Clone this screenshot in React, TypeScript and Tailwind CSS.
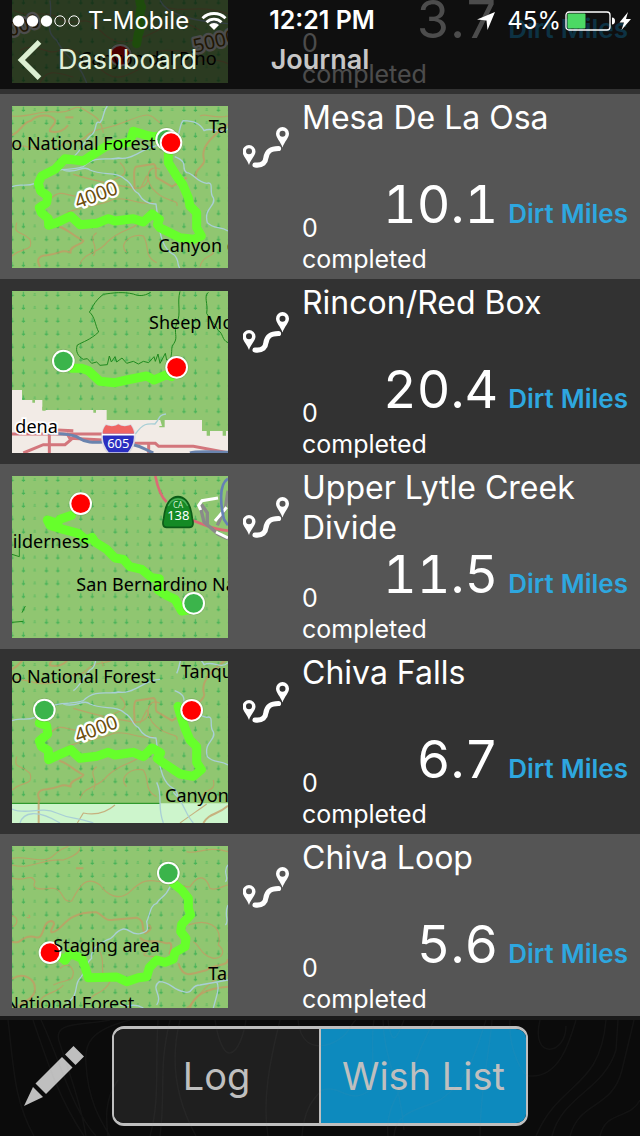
import React from "react";

const FONT = "font-['Inter','Liberation_Sans',sans-serif]";

type MarkerProps = { x: number; y: number; kind: "start" | "end" };

function Marker({ x, y, kind }: MarkerProps) {
  return (
    <g>
      <circle cx={x} cy={y} r="36" fill="#5d8a45" opacity="0.35" />
      <circle cx={x} cy={y} r="34" fill="#fff" />
      <circle cx={x} cy={y} r="28" fill={kind === "start" ? "#3bb44b" : "#ff0000"} />
    </g>
  );
}

function Trail({ d }: { d: string }) {
  return <path d={d} fill="none" stroke="#66ff2b" strokeWidth="27" strokeLinejoin="round" strokeLinecap="round" />;
}

function Contours({ d, wide }: { d: string; wide?: boolean }) {
  return <path d={d} fill="none" stroke="#c49a64" strokeWidth={wide ? 6 : 3.5} strokeLinejoin="round" opacity="0.75" />;
}

function Streams({ d }: { d: string }) {
  return <path d={d} fill="none" stroke="#a9cfd6" strokeWidth="4" strokeLinejoin="round" />;
}

function Label({ x, y, children, halo }: { x: number; y: number; children: string; halo?: boolean }) {
  return (
    <text
      x={x}
      y={y}
      fontSize="54"
      fill="#000"
      stroke={halo ? "#fff" : "none"}
      strokeWidth={halo ? 10 : 0}
      paintOrder="stroke"
      className="font-['Noto_Sans',sans-serif]"
    >
      {children}
    </text>
  );
}

function Elevation({ x, y, value, angle = -20 }: { x: number; y: number; value: string; angle?: number }) {
  return (
    <text
      transform={`rotate(${angle} ${x} ${y})`}
      x={x}
      y={y}
      fontSize="58"
      fill="#6b4e0c"
      stroke="#fff"
      strokeWidth="14"
      strokeLinejoin="round"
      paintOrder="stroke"
      className="font-['Noto_Sans',sans-serif]"
    >
      {value}
    </text>
  );
}

function MapFrame({ id, top, children }: { id: string; top: number; children: React.ReactNode }) {
  return (
    <svg viewBox={`36 ${top} 648 486`} className="h-[162px] w-[216px] shrink-0" role="img" aria-label="Trail map">
      <defs>
        <pattern id={id} x="19" y={top} width="103.200" height="38.800" patternUnits="userSpaceOnUse">
          <path d="M17 2v16M51.400 2v16" stroke="#56b862" strokeWidth="4" />
          <path d="M12 13h10M46.400 13h10" stroke="#45b154" strokeWidth="4" />
          <path d="M82 8h6M81 13h8" stroke="#62bb62" strokeWidth="3" />
        </pattern>
      </defs>
      <rect x="36" y={top} width="648" height="486" fill="#90c671" />
      <rect x="36" y={top} width="648" height="486" fill={`url(#${id})`} />
      {children}
    </svg>
  );
}

function CanyonTerrain() {
  return (
    <g>
      <Contours
        wide
        d="M36 118C70 100 66 78 94 74C110 56 150 52 165 72C170 90 145 92 150 106C175 112 195 102 204 88M402 286C408 260 395 225 408 212L460 204C475 208 462 235 470 245L516 272L560 245M590 250C575 220 620 210 612 190C600 150 640 120 684 84M120 512C112 498 108 480 140 478C190 470 180 460 212 470C205 450 250 445 250 434C220 420 205 400 178 392"
      />
      <Contours d="M36 60C80 66 120 42 170 48S220 20 250 40S300 60 310 110M40 150C90 140 110 180 180 150C220 120 230 150 260 120S300 110 380 76S450 60 480 80M360 200C390 230 370 240 345 250C300 270 330 290 250 300C200 310 190 270 150 310M220 235C270 250 310 262 390 274C440 285 450 250 440 240L420 280M480 220C440 200 430 260 470 290C500 320 540 310 530 330M200 350C250 330 300 330 340 310C380 300 420 330 460 320M600 60C620 50 640 70 684 60M36 480C70 450 100 470 90 430C60 400 40 420 50 380M240 505C250 470 300 470 320 440C360 400 380 410 420 380M290 410C260 430 300 450 280 480M600 512C610 470 650 490 640 450M380 470C350 440 400 410 430 420C450 450 430 480 470 500" />
      <Contours wide d="M196 64h24" />
      <Streams d="M322 30C305 50 315 65 300 80C280 70 295 110 270 120C250 140 240 170 220 182M36 272C60 260 75 275 105 262M150 228C190 215 210 225 250 212C285 175 330 195 355 186C400 195 430 150 480 148M190 222C230 235 250 205 270 222C310 240 350 225 375 250C400 262 395 285 415 292C425 310 440 325 468 324L474 370C480 420 490 460 520 475C540 490 530 512 540 516M530 130C540 110 540 80 550 74C580 75 600 80 612 104C640 90 660 120 684 98M524 182C570 200 540 215 560 230C580 230 590 260 620 262C645 255 625 290 640 305C650 330 610 335 622 380C640 400 660 390 684 405" />
    </g>
  );
}

function MapDelPino() {
  return (
    <MapFrame id="trees-del-pino" top={-238}>
      <Contours d="M40 30C100 60 130 20 190 60C230 80 250 40 290 80S350 140 430 110S520 40 600 90M60 150C110 120 140 170 180 150S260 180 320 220S430 170 480 200S600 150 684 190M120 248C140 200 180 220 220 230M500 20C540 40 600 10 684 40M460 160C520 130 560 180 640 130" />
      <Streams d="M150 0C160 60 130 90 170 120C200 180 230 170 260 248M480 0C500 40 560 60 684 70" />
      <Trail d="M430 -60C445 -30 405 -10 425 20C410 50 430 80 415 100L410 130" />
      <Marker x={361} y={165} kind="end" />
      <Label x={240} y={195}>Canyon del Pino</Label>
      <Elevation x={30} y={110} value="000" />
      <Elevation x={585} y={158} value="5000" angle={-14} />
    </MapFrame>
  );
}

function MapMesa() {
  return (
    <MapFrame id="trees-mesa" top={30}>
      <CanyonTerrain />
      <Trail d="M500 118L460 122L440 118L400 106L390 138L320 150L275 178L250 195L195 188L165 220L125 240L115 262L122 285L143 300L140 320L118 335L124 350L145 368L146 388L175 378L212 360L240 386L290 382L325 368L345 375L400 368L430 378L456 354L478 370L472 385L480 395L540 425L580 430L604 420L590 395L590 350L570 330L565 305L548 265L530 240L505 200L505 170" />
      <Label x={34} y={162}>o National Forest</Label>
      <Label x={626} y={110}>Ta</Label>
      <Label x={475} y={468}>Canyon d</Label>
      <Elevation x={233} y={338} value="4000" />
      <Marker x={500} y={130} kind="start" />
      <Marker x={513} y={140} kind="end" />
    </MapFrame>
  );
}

function MapRincon() {
  return (
    <MapFrame id="trees-rincon" top={33}>
      <path d="M36 330H66V360H127V390H320V420H606V453H684V519H36Z" fill="#f2ebe6" />
      <path d="M97 358h8v10h-8zM127 380h10v12h-10zM280 388h8v10h-8zM480 418h14v24h-16v-4h8zM620 451h10v16h-10zM668 451h10v16h-10z" fill="#90c671" />
      <path d="M452 37C430 50 415 48 400 42C370 35 340 38 310 43C280 65 275 90 268 96C285 110 285 135 296 156C270 180 250 185 232 195C225 215 235 230 250 238L262 236L275 250L290 246L300 256L322 254L328 228L334 246L345 230L350 246L366 234L380 250L400 244L415 252L430 244L446 248L462 230L466 244L474 222L480 250L496 220L500 240L510 240C520 210 510 205 522 190C535 170 520 160 530 130C545 100 530 70 540 34M625 37C610 50 625 70 620 100C630 120 645 130 655 152C670 160 665 180 684 188" fill="none" stroke="#1f8a1f" strokeWidth="3" />
      <path d="M406 462C430 430 440 430 465 432C480 415 475 405 498 402" fill="none" stroke="#a9cfd6" strokeWidth="4" />
      <path d="M36 462H310M148 440V519M170 450L220 452M200 458L212 480L195 494H130L70 519M210 475L310 480M400 490H466L476 499H580L684 518M446 490V519" fill="none" stroke="#d3767c" strokeWidth="9" />
      <path d="M130 458C170 462 205 458 230 470C260 490 280 488 315 486M400 494C430 500 435 510 460 519M570 519C590 512 640 516 684 517" fill="none" stroke="#6a84ae" strokeWidth="9" />
      <Trail d="M215 265L245 265L265 272L300 304L345 308L380 300L440 288L462 300L500 284L515 290" />
      <Marker x={190} y={243} kind="start" />
      <Marker x={530} y={262} kind="end" />
      <Label x={447} y={148}>Sheep Mo</Label>
      <Label x={46} y={459} halo>dena</Label>
      <path d="M318 435C330 440 345 440 355 433C365 440 380 440 392 435C408 455 410 490 385 519H325C300 490 302 455 318 435Z" fill="#2b2fc0" stroke="#d8d8e2" strokeWidth="5" />
      <path d="M318 435C330 440 345 440 355 433C365 440 380 440 392 435C399 444 402 453 402 461H308C308 452 311 443 318 435Z" fill="#ef6464" />
      <path d="M306 464H404" stroke="#fff" strokeWidth="5" />
      <text x="355" y="503" fontSize="39" fill="#fff" textAnchor="middle" className="font-['Noto_Sans',sans-serif]">605</text>
    </MapFrame>
  );
}

function MapLytle() {
  return (
    <MapFrame id="trees-lytle" top={30}>
      <path d="M466 30C472 60 480 90 500 108M575 162C610 175 640 192 684 194" fill="none" stroke="#db6b76" strokeWidth="8" />
      <path d="M600 118L612 168L655 205L684 218M604 115L622 140L622 175M684 74L676 126L652 178" fill="none" stroke="#8a8a8a" strokeWidth="10" />
      <path d="M654 96L606 104L596 118L602 132M680 124L645 165M648 198L684 216" fill="none" stroke="#fff" strokeWidth="9" />
      <path d="M684 38C655 55 662 120 672 160L684 178" fill="none" stroke="#6680b4" strokeWidth="8" />
      <path d="M36 265L58 272V238M36 469L70 466M66 440L76 420" fill="none" stroke="#1f8a1f" strokeWidth="3" />
      <Trail d="M215 148L180 160L172 172L142 162L150 178L190 190L235 202L258 222L276 214L285 228L320 250L345 276L370 280L390 302L425 310L455 335L478 338L474 372L500 388L525 400L545 435L575 430" />
      <Marker x={242} y={113} kind="end" />
      <Label x={38} y={245}>ilderness</Label>
      <Label x={229} y={374}>San Bernardino Na</Label>
      <Marker x={581} y={412} kind="start" />
      <path d="M500 184C488 184 487 172 491 158C495 120 508 93 534 92C560 93 573 120 577 158C581 172 580 184 568 184Z" fill="#148a25" stroke="#0c5c18" strokeWidth="5" />
      <path d="M505 120C512 104 522 99 534 99C546 99 556 104 563 120" fill="none" stroke="#48b058" strokeWidth="4" />
      <text x="534" y="125" fontSize="24" fill="#d4f0d4" textAnchor="middle" className="font-['Noto_Sans',sans-serif]">CA</text>
      <text x="535" y="163" fontSize="39" fill="#fff" textAnchor="middle" className="font-['Noto_Sans',sans-serif]">138</text>
    </MapFrame>
  );
}

function MapChivaFalls() {
  return (
    <MapFrame id="trees-falls" top={36}>
      <path d="M36 463H684V522H36Z" fill="#cdf5cc" />
      <g transform="translate(0 -57)">
        <CanyonTerrain />
      </g>
      <path d="M36 463H480" stroke="#128a12" strokeWidth="3" />
      <Contours wide d="M116 522V455M610 522C630 490 650 500 684 470" />
      <Contours d="M232 522L250 492C290 500 320 490 345 468M540 522C570 500 600 480 620 465" />
      <Streams d="M36 480C80 500 120 470 170 492S220 500 280 522M60 522C70 490 110 480 180 522M470 400C490 440 470 470 490 522M520 430C560 470 550 490 580 522" />
      <Trail d="M118 222L140 230L143 255L118 276L124 292L145 305L146 332L175 318L212 302L240 328L290 322L325 310L345 318L400 310L430 323L456 297L482 312L472 328L485 338L540 375L580 382L604 362L590 340L590 293L570 273L556 240L542 200L534 172" />
      <Label x={34} y={103}>o National Forest</Label>
      <Label x={543} y={88}>Tanqu</Label>
      <Label x={495} y={458}>Canyon</Label>
      <Elevation x={233} y={281} value="4000" />
      <Marker x={133} y={183} kind="start" />
      <Marker x={575} y={184} kind="end" />
    </MapFrame>
  );
}

function MapChivaLoop() {
  return (
    <MapFrame id="trees-loop" top={33}>
      <Contours wide d="M36 320C70 330 60 300 100 305C140 320 120 260 155 258C175 265 145 285 155 292C190 290 190 230 290 232C310 240 315 260 340 254L410 248C440 260 420 280 436 295C455 285 455 275 445 270M420 308C440 330 460 310 500 325C515 320 518 330 508 358M535 385C550 430 570 420 620 405C650 385 684 395 684 372M36 432C70 410 110 430 104 470C95 500 60 500 50 519M570 519C580 480 620 460 684 455M228 100h22" />
      <Contours d="M36 70C80 60 130 90 160 62S200 40 205 33M36 90C100 105 120 70 190 75C230 60 240 50 240 38M36 128C70 145 95 110 105 140C95 160 110 165 150 160C195 155 180 205 215 198C240 150 260 120 300 150C320 180 360 200 390 170C430 130 450 135 480 140C520 130 540 160 570 155C600 110 620 130 630 160C650 170 670 150 684 150M565 270C620 250 670 270 655 330C680 350 665 370 640 370C600 360 600 330 580 320M440 350C410 370 470 360 500 370M300 350C320 390 290 420 330 440C310 480 280 470 270 495M36 242C60 250 50 270 38 275M85 240c10 5 0 12 -4 6M160 450C200 430 220 445 220 410C210 380 190 390 180 400M120 519C110 470 170 480 190 450M560 50C590 60 620 30 684 50M560 519C590 500 620 430 684 420" />
      <Streams d="M510 155C495 190 480 185 470 205C450 210 450 240 440 260C445 285 445 290 420 296C390 300 390 280 370 282C340 290 345 310 320 315C290 330 270 350 275 370C255 385 265 400 240 430C220 450 240 480 200 505M684 90C665 110 690 130 676 140M684 210C670 240 690 260 676 270M470 510C490 480 450 460 478 440C510 440 520 465 550 470C580 480 570 450 600 450L684 435M430 519C400 500 380 520 360 510M640 519C650 480 660 460 650 440" />
      <Trail d="M520 145L545 165L565 190L565 220L572 240L545 268L542 290L558 310L555 335L525 352L520 372L495 382L470 375L448 398L440 425L415 428L380 440L350 426L265 428L255 395L245 370L210 355L195 376L185 368" />
      <Marker x={505} y={114} kind="start" />
      <Marker x={150} y={353} kind="end" />
      <Label x={160} y={350}>Staging area</Label>
      <Label x={625} y={436}>Ta</Label>
      <Label x={16} y={526}>National Forest</Label>
    </MapFrame>
  );
}

function RouteIcon() {
  return (
    <svg viewBox="0 0 48 42" className="h-[42px] w-12 shrink-0" aria-hidden="true">
      <path fillRule="evenodd" fill="#fff" d="M6 38C4 32 -0.500 28.500 -0.500 24.500a6.500 6.500 0 0 1 13 0C12.500 28.500 8 32 6 38ZM6 21.300a3 3 0 1 0 0 6a3 3 0 0 0 0-6Z" />
      <path fillRule="evenodd" fill="#fff" d="M39.500 20.500C37.500 14.500 33 11 33 6.500a6.500 6.500 0 0 1 13 0C46 11 41.500 14.500 39.500 20.500ZM39.500 3.800a3 3 0 1 0 0 6a3 3 0 0 0 0-6Z" />
      <path d="M12 38C20 39 22.500 35 23 30.500C24 24.500 27 21.500 35.500 21.500" fill="none" stroke="#fff" strokeWidth="5.200" strokeLinecap="round" />
    </svg>
  );
}

type Ride = { name: string; miles: string; completed: number; map: React.ReactNode };

const rides: Ride[] = [
  { name: "", miles: "3.7", completed: 0, map: <MapDelPino /> },
  { name: "Mesa De La Osa", miles: "10.1", completed: 0, map: <MapMesa /> },
  { name: "Rincon/Red Box", miles: "20.4", completed: 0, map: <MapRincon /> },
  { name: "Upper Lytle Creek Divide", miles: "11.5", completed: 0, map: <MapLytle /> },
  { name: "Chiva Falls", miles: "6.7", completed: 0, map: <MapChivaFalls /> },
  { name: "Chiva Loop", miles: "5.6", completed: 0, map: <MapChivaLoop /> },
];

function RideRow({ ride }: { ride: Ride }) {
  return (
    <li className="flex h-[185px] items-start bg-[#323232] px-3 text-white even:bg-[#555555]">
      <div className="shrink-0 pt-3">{ride.map}</div>
      <div className="shrink-0 pt-[33px] pr-[11px] pl-[15px]">
        <RouteIcon />
      </div>
      <div className="flex h-full min-w-0 flex-1 flex-col justify-between py-1">
        <h2 className="text-[32px] leading-[40px]">{ride.name}</h2>
        <div>
          <p className="flex items-baseline justify-end gap-2.5 tabular-nums">
            <span className="text-[52px] leading-[54px]">{ride.miles}</span>
            <span className="text-[26px] leading-8 font-semibold text-[#2ea7df]">Dirt Miles</span>
          </p>
          <p className="-mt-[19px] w-32 text-[25px] leading-[31px]">
            {ride.completed} completed
          </p>
        </div>
      </div>
    </li>
  );
}

function StatusBar() {
  return (
    <div className="grid h-10 grid-cols-[1fr_auto_1fr] items-center pt-0.5 pr-2 pl-3 text-2xl text-white">
      <div className="flex items-center gap-2">
        <svg viewBox="0 0 68 12" className="h-3 w-[68px]" aria-hidden="true">
          <g fill="#fff">
            <circle cx="6.500" cy="6" r="5.700" />
            <circle cx="20.500" cy="6" r="5.700" />
            <circle cx="34.500" cy="6" r="5.700" />
          </g>
          <g fill="none" stroke="#fff" strokeWidth="1">
            <circle cx="48" cy="6" r="5.200" />
            <circle cx="62" cy="6" r="5.200" />
          </g>
        </svg>
        <span>T-Mobile</span>
        <svg viewBox="0 0 26 18" className="ml-1 h-[18px] w-[26px]" aria-hidden="true">
          <path d="M1.500 6.200a16.500 16.500 0 0 1 23 0M5.500 10.200a10.800 10.800 0 0 1 15 0" fill="none" stroke="#fff" strokeWidth="2.900" />
          <path d="M13 18L8 13a7 7 0 0 1 10 0Z" fill="#fff" />
        </svg>
      </div>
      <span className="text-[25px] font-semibold">12:21 PM</span>
      <div className="flex items-center justify-end gap-1">
        <svg viewBox="0 0 18 18" className="mr-2 h-[18px] w-[18px]" aria-hidden="true">
          <path d="M18 0L10.500 18L9.500 8.500L0 7.500Z" fill="#fff" />
        </svg>
        <span>45%</span>
        <svg viewBox="0 0 67 20" className="h-5 w-[67px]" aria-hidden="true">
          <rect x="1" y="1" width="44" height="18" rx="3" fill="none" stroke="#fff" strokeWidth="1.300" />
          <rect x="2.500" y="2.500" width="18" height="15" rx="1" fill="#4cd964" />
          <path d="M47 6.500c2 0 3 1.500 3 3.500s-1 3.500-3 3.500z" fill="#fff" />
          <path d="M63 1L54.500 11.500H59L56.500 19L66 8H61Z" fill="#fff" />
        </svg>
      </div>
    </div>
  );
}

function TopBar() {
  return (
    <header className="sticky top-0 z-10 h-[89px] bg-black/70">
      <StatusBar />
      <div className="grid h-10 grid-cols-[1fr_auto_1fr] items-center px-4">
        <button type="button" className="flex h-10 items-center gap-4 text-[27px] text-[#e2f0da]">
          <svg viewBox="0 0 26 42" className="h-10 w-[26px]" aria-hidden="true">
            <path d="M24 2L5 21L24 40" fill="none" stroke="#dcefd3" strokeWidth="5.500" />
          </svg>
          Dashboard
        </button>
        <h1 className="text-[27px] leading-10 font-semibold text-[#c6c6c6]">Journal</h1>
      </div>
    </header>
  );
}

function TopoLines() {
  return (
    <svg
      viewBox="0 0 640 116"
      preserveAspectRatio="xMidYMid slice"
      className="pointer-events-none absolute inset-0 h-full w-full"
      aria-hidden="true"
    >
      <path
        d="M8 0C14 50 14 80 34 116M33 0C50 50 60 80 84 116M41 0C60 40 72 90 96 116M110 0C84 6 50 0 60 24C72 60 82 90 86 116M130 0C90 10 84 24 86 44C88 80 100 100 110 116M118 60C104 80 106 100 108 116M158 0C155 50 160 80 150 116M170 0C158 50 166 70 160 116M215 0C218 20 224 34 230 33C238 32 244 14 246 0M196 116C176 80 170 40 180 0M280 0C270 40 262 80 268 116M298 0C300 20 310 30 330 24C350 16 350 4 356 0M302 116C304 90 312 80 322 70C340 64 350 86 370 70C376 50 370 20 374 0M383 0C384 40 400 60 404 110M388 0C392 30 398 16 404 0M388 116C384 80 412 60 420 30L434 0M394 116C396 90 420 90 440 80C470 60 476 30 486 0M480 116C480 70 490 30 492 0M510 0C508 30 524 58 530 56C560 58 570 20 576 0M540 0C530 40 566 36 566 6M536 116C560 60 600 70 606 0M552 116C562 76 604 70 616 30L618 0M570 116C580 80 612 90 622 50L634 0M600 116C606 90 630 100 640 80"
        fill="none"
        stroke="#9a9a9a"
        strokeOpacity="0.06"
        strokeWidth="1.500"
      />
    </svg>
  );
}

function BottomBar() {
  return (
    <footer className="sticky bottom-0 z-10 -mt-[3px] h-[120px] border-t-4 border-[#1b1b1b] bg-[#0b0b0b]">
      <div className="grid h-full grid-cols-[7fr_26fr_7fr] items-start pt-1.5">
        <button type="button" aria-label="Edit" className="mt-5 ml-6 w-[60px]">
          <svg viewBox="0 0 60 60" className="h-[60px] w-[60px]" aria-hidden="true">
            <g fill="#bfbfbf">
              <path d="M49.500 0L60 10.500L51.500 19L41 8.500Z" />
              <path d="M38 11L48.500 21.500L22 48L11.500 37.500Z" />
              <path d="M9 41L19 51L0 60Z" />
            </g>
          </svg>
        </button>
        <div className="grid h-[100px] grid-cols-2 overflow-hidden rounded-xl border-x-2 border-y-3 border-[#bfbfbf] text-[38px] text-[#bfbfbf]">
          <button type="button" className="border-r border-[#bfbfbf] bg-[#1f1f1f]">
            Log
          </button>
          <button type="button" aria-pressed="true" className="border-l border-[#bfbfbf] bg-[#0d8abe]">
            Wish List
          </button>
        </div>
      </div>
      <TopoLines />
    </footer>
  );
}

export default function App() {
  return (
    <div className={`${FONT} flex min-h-screen flex-col bg-[#0b0b0b]`}>
      <TopBar />
      <main className="-mt-[180px]">
        <ul>
          {rides.map((ride) => (
            <RideRow key={ride.miles} ride={ride} />
          ))}
        </ul>
      </main>
      <BottomBar />
    </div>
  );
}
